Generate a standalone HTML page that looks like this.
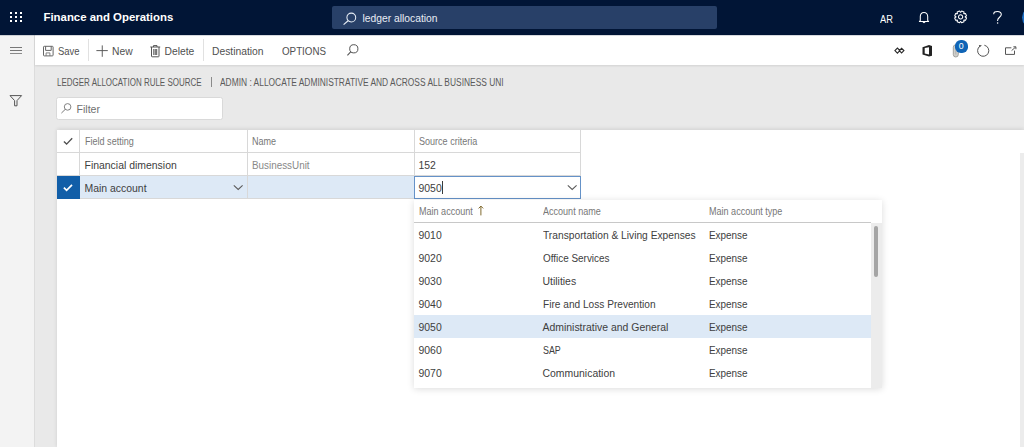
<!DOCTYPE html>
<html><head><meta charset="utf-8">
<style>
*{box-sizing:border-box;margin:0;padding:0}
html,body{width:1024px;height:447px;overflow:hidden;background:#e9e9e9;font-family:"Liberation Sans",sans-serif;}
.a{position:absolute}
.t{position:absolute;white-space:nowrap;line-height:1;font-family:"Liberation Sans",sans-serif}
#top{left:0;top:0;width:1024px;height:35px;background:#011536}
#left{left:0;top:35px;width:35px;height:412px;background:#f3f3f3;border-right:1px solid #dcdcdc}
#bar{left:35px;top:35px;width:989px;height:30px;background:#fff;box-shadow:0 1px 2px rgba(0,0,0,0.10)}
#panel{left:57px;top:129.5px;width:967px;height:318px;background:#fff;box-shadow:0 -1px 4px rgba(0,0,0,0.11)}
.sep{position:absolute;width:1px;background:#e1e1e1}
.gl{position:absolute;background:#d8d8d8}
svg{position:absolute;overflow:visible}
</style></head><body>
<!-- top bar -->
<div id="top" class="a">
  <svg style="left:0;top:0" width="40" height="35">
    <g fill="#fff"><rect x="10" y="12" width="2" height="2"/><rect x="15" y="12" width="2" height="2"/><rect x="20" y="12" width="2" height="2"/><rect x="10" y="16" width="2" height="2"/><rect x="15" y="16" width="2" height="2"/><rect x="20" y="16" width="2" height="2"/><rect x="10" y="20" width="2" height="2"/><rect x="15" y="20" width="2" height="2"/><rect x="20" y="20" width="2" height="2"/></g>
  </svg>
  <div class="t" style="left:43.5px;top:11.5px;font-size:11.4px;font-weight:bold;color:#fff">Finance and Operations</div>
  <div class="a" style="left:332px;top:5.5px;width:385px;height:23px;background:#284068;border-radius:2px"></div>
  <svg style="left:340px;top:8px" width="20" height="20">
    <circle cx="11.3" cy="9.5" r="4.4" fill="none" stroke="#e6ecf5" stroke-width="1.05"/>
    <line x1="8.1" y1="12.7" x2="3.6" y2="16.6" stroke="#e6ecf5" stroke-width="1.2"/>
  </svg>
  <div class="t" style="left:362.5px;top:13.5px;font-size:10.3px;color:#e8edf5">ledger allocation</div>
  <div class="t" style="left:880px;top:14.6px;font-size:10px;color:#fff;transform:scaleX(0.93);transform-origin:0 0">AR</div>
  <svg style="left:915px;top:8px" width="18" height="18">
    <path d="M5.3 12.6 V8.6 C5.3 5.9 6.9 4.4 9 4.4 C11.1 4.4 12.7 5.9 12.7 8.6 V12.6 L13.6 13.4 H4.4 Z" fill="none" stroke="#fff" stroke-width="1.05" stroke-linejoin="round"/>
    <path d="M7.9 13.8 Q9 15.4 10.1 13.8" fill="none" stroke="#fff" stroke-width="1.05"/>
  </svg>
  <svg style="left:951px;top:7px" width="20" height="20">
    <g transform="translate(9.6,9.9) rotate(22.5)" fill="none" stroke="#fff" stroke-width="1.05" stroke-linejoin="round">
      <path d="M4.31 -1.62 L5.86 -1.31 L5.86 1.31 L4.31 1.62 L4.19 1.90 L5.07 3.21 L3.21 5.07 L1.90 4.19 L1.62 4.31 L1.31 5.86 L-1.31 5.86 L-1.62 4.31 L-1.90 4.19 L-3.21 5.07 L-5.07 3.21 L-4.19 1.90 L-4.31 1.62 L-5.86 1.31 L-5.86 -1.31 L-4.31 -1.62 L-4.19 -1.90 L-5.07 -3.21 L-3.21 -5.07 L-1.90 -4.19 L-1.62 -4.31 L-1.31 -5.86 L1.31 -5.86 L1.62 -4.31 L1.90 -4.19 L3.21 -5.07 L5.07 -3.21 L4.19 -1.90 Z"/>
      <circle r="2.1"/>
    </g>
  </svg>
  <svg style="left:990px;top:8px" width="14" height="18">
    <path d="M3.7 6.2 C3.7 4.2 5.3 3.4 7.4 3.4 C9.6 3.4 11.3 4.6 11.3 6.6 C11.3 9 7.6 9.6 7.6 12.4 V13.1" fill="none" stroke="#fff" stroke-width="1.05"/>
    <circle cx="7.6" cy="14.9" r="0.75" fill="#fff"/>
  </svg>
  <div class="a" style="left:1022px;top:7px;width:21px;height:21px;border-radius:50%;background:#1d6fc4"></div>
</div>

<!-- left pane -->
<div id="left" class="a">
  <div class="a" style="left:10px;top:11.5px;width:12px;height:1px;background:#777"></div>
  <div class="a" style="left:10px;top:14.7px;width:12px;height:1px;background:#777"></div>
  <div class="a" style="left:10px;top:17.6px;width:12px;height:1px;background:#8a8a8a"></div>
  <svg style="left:9px;top:59.5px" width="14" height="12">
    <path d="M1 0.6 H12.6 L8 5.6 V10.8 H5.6 V5.6 Z" fill="none" stroke="#555" stroke-width="1" stroke-linejoin="round"/>
  </svg>
</div>

<!-- action bar -->
<div id="bar" class="a">
  <!-- save icon -->
  <svg style="left:8px;top:11px" width="12" height="12">
    <rect x="0.5" y="0.3" width="9.6" height="9.6" rx="0.8" fill="none" stroke="#666" stroke-width="1"/>
    <path d="M2.6 0.3 V4.4 H8.2 V0.3" fill="none" stroke="#666" stroke-width="1"/>
    <path d="M3.1 9.9 V6.9 H6.9 V9.9" fill="none" stroke="#777" stroke-width="0.9"/>
  </svg>
  <div class="t" style="left:22.5px;top:11.5px;font-size:10.3px;color:#505050;transform:scaleX(0.92);transform-origin:0 0">Save</div>
  <div class="sep" style="left:52.5px;top:4px;height:22px"></div>
  <svg style="left:61px;top:10px" width="13" height="13">
    <path d="M6.25 0.4 V11.8 M0.4 5.6 H11.8" stroke="#555" stroke-width="0.95"/>
  </svg>
  <div class="t" style="left:77px;top:11.5px;font-size:10.3px;color:#505050">New</div>
  <svg style="left:114.5px;top:10px" width="11" height="13">
    <path d="M0.3 2 H10.2 M3.5 2 V0.6 H7 V2 M1.5 2 V11.2 Q1.5 11.8 2.1 11.8 H8.4 Q9 11.8 9 11.2 V2 M3.8 4 V10 M5.25 4 V10 M6.7 4 V10" fill="none" stroke="#555" stroke-width="1"/>
  </svg>
  <div class="t" style="left:129.5px;top:11.5px;font-size:10.3px;color:#505050">Delete</div>
  <div class="sep" style="left:168px;top:4px;height:22px"></div>
  <div class="t" style="left:177px;top:11.5px;font-size:10.3px;color:#505050">Destination</div>
  <div class="t" style="left:246.5px;top:11.5px;font-size:10.3px;color:#505050;transform:scaleX(0.95);transform-origin:0 0">OPTIONS</div>
  <svg style="left:311px;top:9px" width="14" height="13">
    <circle cx="7.8" cy="4.8" r="4.1" fill="none" stroke="#555" stroke-width="1"/>
    <line x1="4.9" y1="7.7" x2="1.4" y2="11.3" stroke="#555" stroke-width="1.1"/>
  </svg>
  <!-- right icons -->
  <svg style="left:859px;top:12px" width="12" height="9">
    <path d="M0.9 3.6 L3.4 1.1 L5.9 3.6 L3.4 6.1 Z M5.3 3.6 L7.6 1.3 L9.9 3.6 L7.6 5.9 Z" fill="none" stroke="#2a2a2a" stroke-width="1.15"/>
  </svg>
  <svg style="left:886px;top:10px" width="12" height="12">
    <path d="M1.5 2.2 L8 0 L11 0.9 V10.7 L8 11.5 L1.5 9.5 Z" fill="#222"/>
    <path d="M3.7 3.1 L8 2.2 V9.4 L3.7 8.5 Z" fill="#fff"/>
  </svg>
  <svg style="left:917px;top:9px" width="8" height="14">
    <rect x="1.3" y="0.8" width="5" height="12.2" rx="2.5" fill="#d0d0cc" stroke="#9a9a96" stroke-width="0.9"/>
    <path d="M3.8 4 V10.5" stroke="#a8a8a8" stroke-width="0.8"/>
  </svg>
  <div class="a" style="left:920px;top:5px;width:13px;height:13px;border-radius:45%;background:#0f64b6"></div>
  <div class="t" style="left:923.7px;top:7px;font-size:8.8px;color:#fff">0</div>
  <svg style="left:941px;top:9px" width="14" height="14">
    <path d="M8.36 1.22 A5.6 5.6 0 1 1 3.99 2.11" fill="none" stroke="#555" stroke-width="1"/>
    <path d="M2.9 0.9 L5.9 1.3 L3.5 3.5 Z" fill="#555"/>
  </svg>
  <svg style="left:969px;top:11px" width="14" height="11">
    <path d="M7.4 1.8 H1.5 V8.4 H10.5 V4.6" fill="none" stroke="#555" stroke-width="1"/>
    <path d="M7.6 4.6 L11.6 1.1 M9.4 0.8 H11.9 V3.2" fill="none" stroke="#555" stroke-width="1"/>
  </svg>
</div>

<!-- content -->
<div class="t" style="left:57px;top:77.5px;font-size:10px;color:#5a5a5a;transform:scaleX(0.799);transform-origin:0 0">LEDGER ALLOCATION RULE SOURCE</div>
<div class="a" style="left:210.5px;top:77px;width:1px;height:10px;background:#8a8a8a"></div>
<div class="t" style="left:219.5px;top:77.5px;font-size:10px;color:#5a5a5a;transform:scaleX(0.840);transform-origin:0 0">ADMIN : ALLOCATE ADMINISTRATIVE AND ACROSS ALL BUSINESS UNI</div>
<div class="a" style="left:56px;top:96.5px;width:167px;height:23px;background:#fff;border:1px solid #d9d9d9;border-radius:2.5px"></div>
<svg style="left:60px;top:103px" width="13" height="12">
  <circle cx="7.6" cy="3.9" r="3.3" fill="none" stroke="#7a7a7a" stroke-width="0.95"/>
  <line x1="5.3" y1="6.3" x2="1.4" y2="10.1" stroke="#7a7a7a" stroke-width="1"/>
</svg>
<div class="t" style="left:76.5px;top:103.5px;font-size:10.6px;color:#707070">Filter</div>

<div id="panel" class="a"></div>
<div class="a" style="left:1020px;top:152.5px;width:4px;height:295px;background:#ececec"></div>

<!-- grid -->
<div class="a" style="left:80px;top:176px;width:334px;height:22px;background:#dde9f6"></div>
<div class="gl" style="left:57px;top:152px;width:524px;height:1px"></div>
<div class="gl" style="left:57px;top:175px;width:524px;height:1px"></div>
<div class="gl" style="left:57px;top:198px;width:524px;height:1px"></div>
<div class="gl" style="left:79px;top:129.5px;width:1px;height:69px"></div>
<div class="gl" style="left:247px;top:129.5px;width:1px;height:69px"></div>
<div class="gl" style="left:414px;top:129.5px;width:1px;height:69px"></div>
<div class="gl" style="left:580px;top:129.5px;width:1px;height:69px"></div>
<svg style="left:62px;top:136px" width="12" height="10">
  <path d="M1.9 5.4 L4.6 8.1 L10.2 2.2" fill="none" stroke="#505050" stroke-width="1.35"/>
</svg>
<div class="t" style="left:84.5px;top:136.5px;font-size:10.4px;color:#777;transform:scaleX(0.87);transform-origin:0 0">Field setting</div>
<div class="t" style="left:251.5px;top:136.5px;font-size:10.4px;color:#777;transform:scaleX(0.87);transform-origin:0 0">Name</div>
<div class="t" style="left:418.5px;top:136.5px;font-size:10.4px;color:#777;transform:scaleX(0.87);transform-origin:0 0">Source criteria</div>
<div class="t" style="left:84.5px;top:160.5px;font-size:10.45px;color:#404040">Financial dimension</div>
<div class="t" style="left:251.5px;top:160.5px;font-size:10.4px;color:#888;transform:scaleX(0.95);transform-origin:0 0">BusinessUnit</div>
<div class="t" style="left:418.5px;top:160.5px;font-size:10.45px;color:#404040">152</div>
<!-- selected row -->
<div class="a" style="left:57px;top:175.5px;width:22.5px;height:23px;background:#115ea8"></div>
<svg style="left:62px;top:183px" width="12" height="10">
  <path d="M1.9 4.6 L4.6 7.4 L10 1.9" fill="none" stroke="#fff" stroke-width="1.7"/>
</svg>
<div class="t" style="left:84.5px;top:183.5px;font-size:10.45px;color:#404040">Main account</div>
<svg style="left:232px;top:184px" width="12" height="8">
  <path d="M1.8 1.3 L6.2 5.5 L10.6 1.3" fill="none" stroke="#5a5a5a" stroke-width="1.05"/>
</svg>
<div class="a" style="left:414px;top:176px;width:167px;height:22.5px;background:#fff;border:1px solid #6592c8"></div>
<div class="t" style="left:418.5px;top:183.5px;font-size:10.45px;color:#404040">9050</div>
<div class="a" style="left:442px;top:180.5px;width:1px;height:13.5px;background:#3a3a3a"></div>
<svg style="left:566px;top:184px" width="12" height="8">
  <path d="M1.8 1.3 L6.2 5.5 L10.6 1.3" fill="none" stroke="#5a5a5a" stroke-width="1.05"/>
</svg>

<!-- dropdown -->
<div class="a" style="left:414px;top:200px;width:468px;height:188px;background:#fff;box-shadow:0 1px 7px rgba(0,0,0,0.14)"></div>
<div class="a" style="left:414px;top:222px;width:457px;height:1px;background:#c8c8c8"></div>
<div class="a" style="left:871px;top:222.5px;width:11px;height:165.5px;background:#ececec"></div>
<div class="a" style="left:874.3px;top:225.8px;width:3.8px;height:51.5px;background:#a5a5a5;border-radius:2px"></div>
<div class="t" style="left:418.5px;top:206.5px;font-size:10.4px;color:#777;transform:scaleX(0.87);transform-origin:0 0">Main account</div>
<svg style="left:477px;top:205px" width="8" height="12">
  <path d="M3.9 1 V10.4 M1.6 3.4 L3.9 1.1 L6.2 3.4" fill="none" stroke="#806a2e" stroke-width="1"/>
</svg>
<div class="t" style="left:542.5px;top:206.5px;font-size:10.4px;color:#777;transform:scaleX(0.87);transform-origin:0 0">Account name</div>
<div class="t" style="left:708.5px;top:206.5px;font-size:10.4px;color:#777;transform:scaleX(0.87);transform-origin:0 0">Main account type</div>
<div class="a" style="left:414px;top:314.5px;width:457px;height:23px;background:#dde9f6"></div>
<div id="rows"></div>
<div class="t" style="left:418.5px;top:231px;font-size:10.45px;color:#404040">9010</div>
<div class="t" style="left:542.5px;top:231px;font-size:10.45px;color:#404040;transform:scaleX(0.98);transform-origin:0 0">Transportation &amp; Living Expenses</div>
<div class="t" style="left:708.5px;top:231px;font-size:10.45px;color:#404040;transform:scaleX(0.95);transform-origin:0 0">Expense</div>
<div class="t" style="left:418.5px;top:254px;font-size:10.45px;color:#404040">9020</div>
<div class="t" style="left:542.5px;top:254px;font-size:10.45px;color:#404040;transform:scaleX(0.95);transform-origin:0 0">Office Services</div>
<div class="t" style="left:708.5px;top:254px;font-size:10.45px;color:#404040;transform:scaleX(0.95);transform-origin:0 0">Expense</div>
<div class="t" style="left:418.5px;top:277px;font-size:10.45px;color:#404040">9030</div>
<div class="t" style="left:542.5px;top:277px;font-size:10.45px;color:#404040">Utilities</div>
<div class="t" style="left:708.5px;top:277px;font-size:10.45px;color:#404040;transform:scaleX(0.95);transform-origin:0 0">Expense</div>
<div class="t" style="left:418.5px;top:300px;font-size:10.45px;color:#404040">9040</div>
<div class="t" style="left:542.5px;top:300px;font-size:10.45px;color:#404040;transform:scaleX(0.97);transform-origin:0 0">Fire and Loss Prevention</div>
<div class="t" style="left:708.5px;top:300px;font-size:10.45px;color:#404040;transform:scaleX(0.95);transform-origin:0 0">Expense</div>
<div class="t" style="left:418.5px;top:323px;font-size:10.45px;color:#404040">9050</div>
<div class="t" style="left:542.5px;top:323px;font-size:10.45px;color:#404040">Administrative and General</div>
<div class="t" style="left:708.5px;top:323px;font-size:10.45px;color:#404040;transform:scaleX(0.95);transform-origin:0 0">Expense</div>
<div class="t" style="left:418.5px;top:346px;font-size:10.45px;color:#404040">9060</div>
<div class="t" style="left:542.5px;top:346px;font-size:10.45px;color:#404040;transform:scaleX(0.85);transform-origin:0 0">SAP</div>
<div class="t" style="left:708.5px;top:346px;font-size:10.45px;color:#404040;transform:scaleX(0.95);transform-origin:0 0">Expense</div>
<div class="t" style="left:418.5px;top:369px;font-size:10.45px;color:#404040">9070</div>
<div class="t" style="left:542.5px;top:369px;font-size:10.45px;color:#404040">Communication</div>
<div class="t" style="left:708.5px;top:369px;font-size:10.45px;color:#404040;transform:scaleX(0.95);transform-origin:0 0">Expense</div>

<div class="a" style="left:0;top:35px;width:1024px;height:1px;background:rgba(0,16,50,0.16)"></div>
</body></html>
